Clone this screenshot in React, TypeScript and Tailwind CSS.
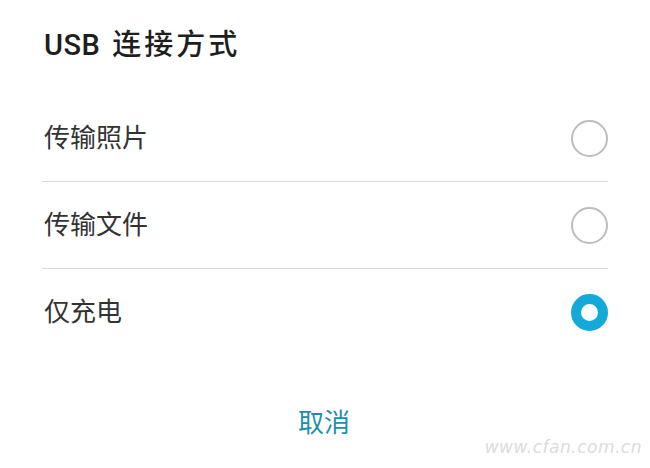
import React from "react";

const items = [
  { label: "传输照片", selected: false },
  { label: "传输文件", selected: false },
  { label: "仅充电", selected: true },
];

function Radio({ selected }: { selected: boolean }) {
  if (selected) {
    return <div className="w-[37px] h-[37px] rounded-full border-[10px] border-[#13a9d9] bg-white" />;
  }
  return <div className="w-[37px] h-[37px] rounded-full border-2 border-[#bdbdbd] bg-white" />;
}

export default function App() {
  return (
    <div
      className="w-[650px] h-[468px] bg-white relative overflow-hidden"
      style={{ fontFamily: '"Roboto", "Noto Sans CJK SC", sans-serif' }}
    >
      <div className="pl-[44px] pr-[42px] pt-[24px]">
        <div className="h-[44px] flex items-center text-[29px] font-medium text-[#1e1e1e]">
          <span className="tracking-[0.5px]">USB</span>
          <span className="ml-[12px] tracking-[3px]">连接方式</span>
        </div>
        <div className="mt-[27px]">
          {items.map((it, i) => (
            <div key={it.label}>
              <div className="h-[86px] flex items-center justify-between">
                <span className="text-[26px] text-[#333333]">{it.label}</span>
                <Radio selected={it.selected} />
              </div>
              {i < items.length - 1 && <div className="h-px bg-[#dadada] -ml-[2px]" />}
            </div>
          ))}
        </div>
      </div>
      <div className="mt-[49px] flex justify-center">
        <span className="text-[26px] text-[#1e8faa] ml-[-2px]">取消</span>
      </div>
      <div
        className="absolute right-[8px] bottom-[8px] text-[17px] italic text-[#dcdcdc] tracking-[0.5px]"
        style={{ fontFamily: '"DejaVu Sans", sans-serif' }}
      >
        www.cfan.com.cn
      </div>
    </div>
  );
}
